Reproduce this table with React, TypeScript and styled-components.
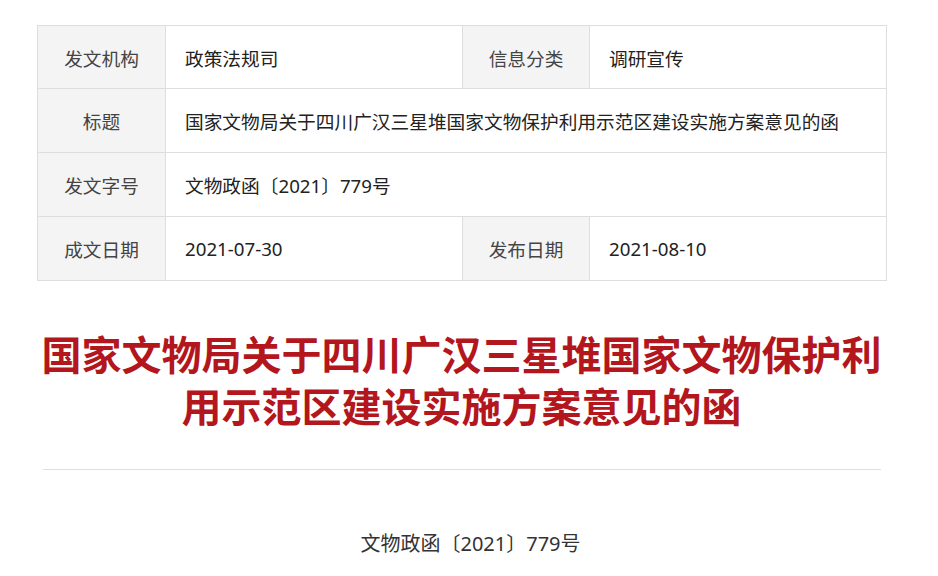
import React from 'react';
import styled, { createGlobalStyle } from 'styled-components';

const GlobalStyle = createGlobalStyle`
  html, body {
    margin: 0;
    padding: 0;
    background: #fff;
  }
  body {
    font-family: "Noto Sans", "Noto Sans CJK SC", sans-serif;
  }
`;

const Page = styled.div`
  width: 849px;
  padding: 25px 0 0 37px;
`;

const InfoTable = styled.table`
  width: 849px;
  border-collapse: collapse;
  table-layout: fixed;
  border: 1px solid #dedede;
`;

const Row = styled.tr<{ first?: boolean }>`
  height: ${({ first }) => (first ? 63 : 64)}px;
`;

const Label = styled.td`
  background: #f4f4f4;
  color: #444;
  font-size: 18.7px;
  text-align: center;
  border: 1px solid #dedede;
  padding: 0;
`;

const Value = styled.td`
  color: #222;
  font-size: 18.7px;
  text-align: left;
  padding: 0 0 0 19px;
  border: 1px solid #dedede;
  white-space: nowrap;
`;

const Title = styled.h1`
  margin: 46px 0 0;
  font-size: 40px;
  line-height: 52px;
  font-weight: 700;
  color: #b3161c;
  text-align: center;
  font-family: "Noto Sans CJK SC", sans-serif;
`;

const Divider = styled.hr`
  margin: 38px 5px 0 6px;
  border: 0;
  border-top: 1px solid #dedede;
  height: 0;
`;

const DocNumber = styled.p`
  margin: 59px 0 0;
  padding-left: 18px;
  font-size: 20px;
  line-height: 30px;
  color: #333;
  text-align: center;
`;

type Field = { label: string; value: string };

const rows: Field[][] = [
  [
    { label: '发文机构', value: '政策法规司' },
    { label: '信息分类', value: '调研宣传' },
  ],
  [{ label: '标题', value: '国家文物局关于四川广汉三星堆国家文物保护利用示范区建设实施方案意见的函' }],
  [{ label: '发文字号', value: '文物政函〔2021〕779号' }],
  [
    { label: '成文日期', value: '2021-07-30' },
    { label: '发布日期', value: '2021-08-10' },
  ],
];

const App = () => {
  return (
    <>
      <GlobalStyle />
      <Page>
        <InfoTable>
          <colgroup>
            <col style={{ width: 128 }} />
            <col style={{ width: 297 }} />
            <col style={{ width: 127 }} />
            <col style={{ width: 297 }} />
          </colgroup>
          <tbody>
            {rows.map((row, i) => (
              <Row key={i} first={i === 0}>
                {row.map((f) => (
                  <React.Fragment key={f.label}>
                    <Label>{f.label}</Label>
                    <Value colSpan={row.length === 1 ? 3 : 1}>{f.value}</Value>
                  </React.Fragment>
                ))}
              </Row>
            ))}
          </tbody>
        </InfoTable>

        <Title>
          国家文物局关于四川广汉三星堆国家文物保护利
          <br />
          用示范区建设实施方案意见的函
        </Title>

        <Divider />

        <DocNumber>文物政函〔2021〕779号</DocNumber>
      </Page>
    </>
  );
};

export default App;
